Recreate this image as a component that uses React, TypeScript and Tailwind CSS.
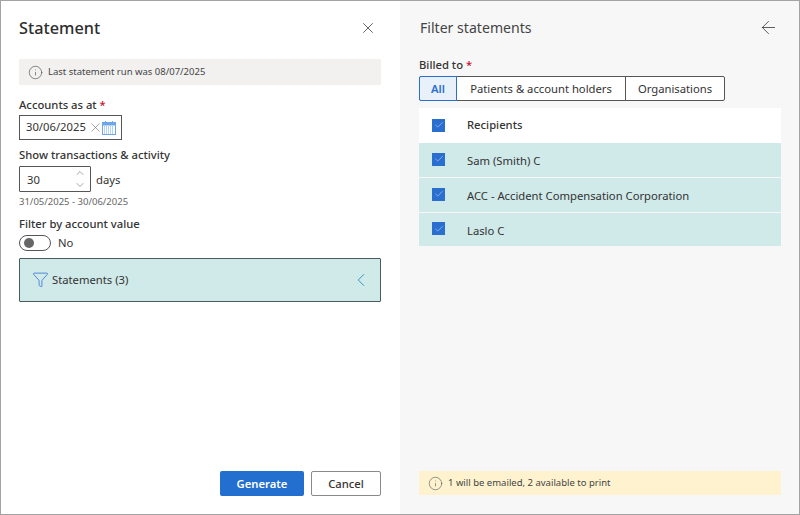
import { ChevronDown, ChevronLeft, ChevronUp, Funnel, Info, X, ArrowLeft, Check } from 'lucide-react';

const recipients = ['Sam (Smith) C', 'ACC - Accident Compensation Corporation', 'Laslo C'];

function CheckBox({ className = '' }: { className?: string }) {
  return (
    <span className={`flex h-[13px] w-[13px] items-center justify-center bg-[#2a6fd0] ${className}`}>
      <Check size={10} strokeWidth={1.25} className="text-[#d5e4f7]" />
    </span>
  );
}

function CalendarIcon() {
  return (
    <svg width="14" height="14" viewBox="0 0 14 14" fill="none" className="shrink-0">
      <rect x="0.5" y="1.5" width="13" height="12" fill="#fff" stroke="#6ea6ea" />
      <rect x="0.5" y="1.5" width="13" height="2.5" fill="#6ea6ea" stroke="#6ea6ea" />
      <path d="M3.5 0v2M10.5 0v2" stroke="#6ea6ea" />
      <path d="M2 6h10M2 8h10M2 10h10M2 12h10" stroke="#6ea6ea" strokeDasharray="1 1" />
    </svg>
  );
}

export default function App() {
  return (
    <div className="flex h-[515px] w-[800px] overflow-hidden border border-[#a3a3a3] bg-white font-['Noto_Sans',sans-serif] text-[11.25px] text-[#333]">
      <div className="flex w-[399px] shrink-0 flex-col pb-[18px] pl-[18px] pr-[19px]">
        <div className="flex h-[58px] shrink-0 items-center justify-between pb-[5px]">
          <h1 className="text-[16.25px] font-medium leading-6 text-[#2e2e2e]">Statement</h1>
          <X size={18} strokeWidth={1.1} className="mr-[4px] text-[#444]" />
        </div>
        <div className="flex h-[26px] items-center gap-[5px] bg-[#f2f1f0] pl-[9px] text-[9.5px] text-[#444]">
          <Info size={15} strokeWidth={1.1} className="text-[#555]" />
          Last statement run was 08/07/2025
        </div>
        <div className="mt-[11px] font-medium leading-[18px]">
          Accounts as at <span className="text-[#c8102e]">*</span>
        </div>
        <div className="mt-px flex h-[25px] w-[103px] items-center border border-[#555] pl-[6px]">
          <span>30/06/2025</span>
          <X size={15} strokeWidth={0.9} className="-mr-px ml-[2px] shrink-0 text-[#666]" />
          <CalendarIcon />
        </div>
        <div className="mt-[6px] font-medium leading-[18px]">Show transactions &amp; activity</div>
        <div className="mt-[2px] flex items-center gap-[5px]">
          <div className="flex h-[26px] w-[72px] items-center justify-between rounded-[1px] border border-[#555] pl-[7px] pr-[4px]">
            <span className="pt-[2px]">30</span>
            <div className="flex flex-col text-[#666]">
              <ChevronUp size={12} strokeWidth={1.2} />
              <ChevronDown size={12} strokeWidth={1.2} />
            </div>
          </div>
          <span className="pt-[2px]">days</span>
        </div>
        <div className="mt-[2px] text-[9.5px] leading-[16px] text-[#666]">31/05/2025 - 30/06/2025</div>
        <div className="mt-[5px] font-medium leading-[18px]">Filter by account value</div>
        <div className="mt-[2px] flex items-center gap-[7px]">
          <div className="flex h-[16px] w-[32px] items-center rounded-full border border-[#555] pl-[4px]">
            <span className="h-[10px] w-[10px] rounded-full bg-[#666]" />
          </div>
          <span>No</span>
        </div>
        <div className="mt-[6px] flex h-[44px] items-center justify-between rounded-[1px] border border-[#4a5a5e] bg-[#d0e9e9] pl-[12px] pr-[8px]">
          <div className="flex items-center gap-[3px]">
            <Funnel size={17} strokeWidth={1.1} className="text-[#2a6fd0]" />
            <span className="pt-[2px]">Statements (3)</span>
          </div>
          <ChevronLeft size={22} strokeWidth={1} className="text-[#2a8fc0]" />
        </div>
        <div className="mt-auto flex justify-end gap-[7px]">
          <button className="h-[25px] w-[84px] rounded-[2px] bg-[#236fcf] pt-[2px] font-semibold text-white">Generate</button>
          <button className="h-[25px] w-[70px] rounded-[2px] border border-[#8a8a8a] bg-white pt-[2px] font-medium text-[#333]">Cancel</button>
        </div>
      </div>

      <div className="flex flex-1 flex-col bg-[#f7f7f7] pb-[19px] pl-[19px] pr-[18px]">
        <div className="flex h-[55px] shrink-0 items-center justify-between pb-[3px]">
          <h2 className="ml-px mt-[2px] text-[14.1px] leading-6 text-[#444]">Filter statements</h2>
          <ArrowLeft size={21} strokeWidth={0.9} className="mr-[2px] text-[#333]" />
        </div>
        <div className="font-medium leading-[18px]">
          Billed to <span className="text-[#c8102e]">*</span>
        </div>
        <div className="mt-[2px] flex h-[25px] w-[306px] rounded-[2px] border border-[#555] bg-white">
          <div className="-m-px flex w-[38px] items-center justify-center rounded-l-[2px] border border-[#2a6fd0] bg-[#e8f0fa] pt-[2px] font-semibold text-[#2a6fd0]">All</div>
          <div className="ml-px flex w-[169px] items-center justify-center border-r border-[#555] pt-[2px]">Patients &amp; account holders</div>
          <div className="flex flex-1 items-center justify-center pt-[2px]">Organisations</div>
        </div>
        <div className="mt-[7px] flex h-[35px] items-center gap-[22px] bg-white pl-[13px] font-medium">
          <CheckBox className="mb-px" />
          <span>Recipients</span>
        </div>
        <div className="flex flex-col gap-px">
          {recipients.map((name) => (
            <div key={name} className="flex h-[34px] items-center gap-[22px] bg-[#d0e9e9] pl-[13px] text-[#333] last:h-[33px]">
              <CheckBox className="mb-[2px]" />
              <span className="pt-[3px]">{name}</span>
            </div>
          ))}
        </div>
        <div className="mt-auto flex h-[24px] items-center gap-[5px] bg-[#fff3cf] pl-[9px] text-[9.5px] text-[#444]">
          <Info size={15} strokeWidth={1.1} className="text-[#666]" />
          1 will be emailed, 2 available to print
        </div>
      </div>
    </div>
  );
}
